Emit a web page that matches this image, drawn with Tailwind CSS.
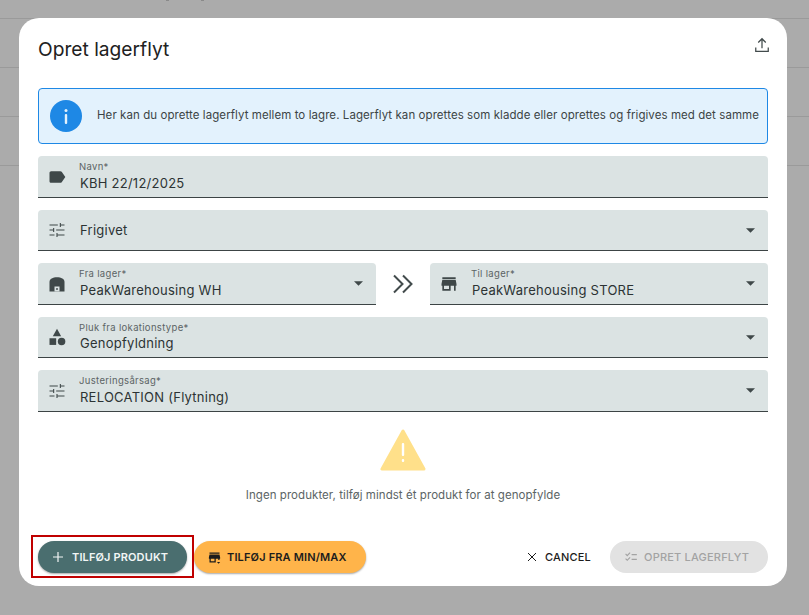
<!DOCTYPE html>
<html lang="da">
<head>
  <meta charset="UTF-8" />
  <title>Opret lagerflyt</title>
  <script src="https://cdn.jsdelivr.net/npm/@tailwindcss/browser@4"></script>
</head>
<body class="font-['Inter',sans-serif]">
  <div class="relative h-[615px] w-[809px] overflow-hidden bg-[#ababab]">
    <!-- baggrund -->
    <div class="absolute left-[166px] top-0 h-px w-[3px] bg-[#8a8a8a]"></div>
    <div class="absolute left-[201px] top-0 h-px w-[3px] bg-[#8a8a8a]"></div>
    <div class="flex flex-col pt-[18px]">
      <div class="h-[49px] border-t border-[#9a9a9a]"></div>
      <div class="h-[49px] border-t border-[#9a9a9a]"></div>
      <div class="h-[49px] border-t border-[#9a9a9a]"></div>
      <div class="h-[49px] border-t border-[#9a9a9a]"></div>
    </div>

    <!-- dialog -->
    <div class="absolute left-[19px] top-[18px] flex h-[568px] w-[768px] flex-col rounded-[20px] bg-white px-[19px]">
      <div class="flex h-[70px] items-start justify-between">
        <h2 class="mt-[19px] text-[19.200px] leading-[24px] text-[#212121]">Opret lagerflyt</h2>
        <svg class="mt-[17px] mr-[-4px]" width="20" height="20" viewBox="0 0 24 24" fill="none" stroke="#424b4c" stroke-width="1.500"><path d="M4.500 15v4.500h15V15M12 16V5M7.500 9 12 4.500 16.500 9"/></svg>
      </div>

      <!-- info -->
      <div class="flex h-[56px] items-center rounded-[4px] border border-[#1e88e5] bg-[#e3f2fd] pl-[11px]">
        <span class="flex h-[32px] w-[32px] shrink-0 items-center justify-center rounded-full bg-[#1e88e5]">
          <svg width="4" height="17" viewBox="0 0 4 17" fill="#e3f2fd"><circle cx="2" cy="2.500" r="1.500"/><rect x="0.800" y="6" width="2.400" height="10" rx="1"/></svg>
        </span>
        <p class="ml-[15px] whitespace-nowrap text-[11.500px] tracking-[0.07px] text-[#3c4445]">Her kan du oprette lagerflyt mellem to lagre. Lagerflyt kan oprettes som kladde eller oprettes og frigives med det samme</p>
      </div>

      <div class="mt-[12px] flex flex-col gap-[12px]">
        <!-- navn -->
        <div class="flex h-[42px] items-center rounded-t-[4px] border-b border-[#3c4445] bg-[#dbe3e3] pl-[9px] pr-[13px]">
          <svg class="shrink-0" width="20" height="20" viewBox="0 0 24 24" fill="#3f4849"><path d="M17.630 5.840C17.270 5.330 16.670 5 16 5L5 5.010C3.900 5.010 3 5.900 3 7v10c0 1.100.9 1.990 2 1.990L16 19c.67 0 1.270-.33 1.630-.84L22 12l-4.370-6.160z"/></svg>
          <div class="ml-[12px] flex flex-col">
            <span class="text-[9.500px] leading-[12px] tracking-[0.33px] text-[#5b6465]">Navn*</span>
            <span class="mt-[1px] ml-[1px] text-[13px] leading-[18px] tracking-[0.25px] text-[#2c3334]">KBH 22/12/2025</span>
          </div>
        </div>

        <!-- status -->
        <div class="flex h-[41px] items-center rounded-t-[4px] border-b border-[#3c4445] bg-[#dbe3e3] pl-[9px] pr-[13px]">
          <svg class="shrink-0" width="20" height="20" viewBox="0 0 24 24" fill="none" stroke="#3f4849" stroke-width="1.300"><path d="M3 6h10M16 3.500v5M16 6h5M3 12h5M8 9.500v5M11 12h10M3 18h6M12 15.500v5M12 18h9"/></svg>
          <span class="mt-[1px] ml-[13px] text-[13px] tracking-[0.25px] text-[#2c3334]">Frigivet</span>
          <svg class="ml-auto" width="9" height="5" viewBox="0 0 10 5" fill="#3f4849"><path d="M0 0l5 5 5-5z"/></svg>
        </div>

        <!-- lagre -->
        <div class="flex items-center">
          <div class="flex h-[42px] w-[338px] items-center rounded-t-[4px] border-b border-[#3c4445] bg-[#dbe3e3] pl-[9px] pr-[13px]">
            <svg class="shrink-0" width="20" height="20" viewBox="0 0 24 24" fill="#3f4849"><path d="M3 21V9.500C3 6 7 4 12 4s9 2 9 5.500V21z"/><rect x="9" y="15" width="6" height="6" fill="#dbe3e3"/><rect x="11" y="17" width="2" height="2"/></svg>
            <div class="ml-[12px] flex flex-col">
              <span class="text-[9.500px] leading-[12px] tracking-[0.33px] text-[#5b6465]">Fra lager*</span>
              <span class="mt-[1px] ml-[1px] text-[13px] leading-[18px] tracking-[0.25px] text-[#2c3334]">PeakWarehousing WH</span>
            </div>
            <svg class="ml-auto" width="9" height="5" viewBox="0 0 10 5" fill="#3f4849"><path d="M0 0l5 5 5-5z"/></svg>
          </div>
          <div class="flex w-[54px] justify-center">
            <svg width="22" height="20" viewBox="0 0 22 20" fill="none" stroke="#424b4c" stroke-width="2"><path d="M2 1.500 10.500 10 2 18.500M11 1.500 19.500 10 11 18.500"/></svg>
          </div>
          <div class="flex h-[42px] w-[338px] items-center rounded-t-[4px] border-b border-[#3c4445] bg-[#dbe3e3] pl-[9px] pr-[13px]">
            <svg class="shrink-0" width="20" height="20" viewBox="0 0 24 24" fill="#3f4849"><path d="M20 4H4v2h16V4zm1 10v-2l-1-5H4l-1 5v2h1v6h10v-6h4v6h2v-6h1zm-9 4H6v-4h6v4z"/></svg>
            <div class="ml-[12px] flex flex-col">
              <span class="text-[9.500px] leading-[12px] tracking-[0.33px] text-[#5b6465]">Til lager*</span>
              <span class="mt-[1px] ml-[1px] text-[13px] leading-[18px] tracking-[0.25px] text-[#2c3334]">PeakWarehousing STORE</span>
            </div>
            <svg class="ml-auto" width="9" height="5" viewBox="0 0 10 5" fill="#3f4849"><path d="M0 0l5 5 5-5z"/></svg>
          </div>
        </div>

        <!-- lokationstype -->
        <div class="flex h-[41px] items-center rounded-t-[4px] border-b border-[#3c4445] bg-[#dbe3e3] pl-[9px] pr-[13px]">
          <svg class="shrink-0" width="20" height="20" viewBox="0 0 24 24" fill="#3f4849"><path d="M12 2 7 11h10z"/><circle cx="17.500" cy="17.500" r="4.500"/><rect x="3" y="13.500" width="8" height="8"/></svg>
          <div class="ml-[12px] flex flex-col">
            <span class="text-[9.500px] leading-[12px] tracking-[0.33px] text-[#5b6465]">Pluk fra lokationstype*</span>
            <span class="ml-[1px] text-[13px] leading-[18px] tracking-[0.25px] text-[#2c3334]">Genopfyldning</span>
          </div>
          <svg class="ml-auto" width="9" height="5" viewBox="0 0 10 5" fill="#3f4849"><path d="M0 0l5 5 5-5z"/></svg>
        </div>

        <!-- justeringsårsag -->
        <div class="flex h-[42px] items-center rounded-t-[4px] border-b border-[#3c4445] bg-[#dbe3e3] pl-[9px] pr-[13px]">
          <svg class="shrink-0" width="20" height="20" viewBox="0 0 24 24" fill="none" stroke="#3f4849" stroke-width="1.300"><path d="M3 6h10M16 3.500v5M16 6h5M3 12h5M8 9.500v5M11 12h10M3 18h6M12 15.500v5M12 18h9"/></svg>
          <div class="ml-[12px] flex flex-col">
            <span class="text-[9.500px] leading-[12px] tracking-[0.33px] text-[#5b6465]">Justeringsårsag*</span>
            <span class="mt-[1px] ml-[1px] text-[13px] leading-[18px] tracking-[0.25px] text-[#2c3334]">RELOCATION (Flytning)</span>
          </div>
          <svg class="ml-auto" width="9" height="5" viewBox="0 0 10 5" fill="#3f4849"><path d="M0 0l5 5 5-5z"/></svg>
        </div>
      </div>

      <!-- tom liste -->
      <div class="mt-[17px] flex flex-col items-center">
        <svg width="46" height="42" viewBox="0 0 46 42"><path d="M23 2 2 40h42z" fill="#ffe08a" stroke="#ffe08a" stroke-width="3" stroke-linejoin="round"/><rect x="21.800" y="14" width="2.400" height="13" rx="1" fill="#fff"/><rect x="21.800" y="30" width="2.400" height="3" rx="1" fill="#fff"/></svg>
        <p class="mt-[16px] text-[11.500px] tracking-[0.06px] text-[#5b6465]">Ingen produkter, tilføj mindst ét produkt for at genopfylde</p>
      </div>

      <!-- knapper -->
      <div class="absolute inset-x-[19px] bottom-[13px] flex h-[32px] items-center">
        <div class="relative flex h-[32px] w-[149px] items-center rounded-full bg-[#4a6e6f] pl-[15px] text-[11px] font-semibold tracking-[0.13px] text-[#f2f6f6] shadow-[0_1px_2px_rgba(0,0,0,0.35)]">
          <svg width="10" height="10" viewBox="0 0 10 10" stroke="#f2f6f6" stroke-width="1.200"><path d="M5 0v10M0 5h10"/></svg>
          <span class="ml-[9px]">TILFØJ PRODUKT</span>
          <div class="absolute left-[-7px] top-[-6px] h-[43px] w-[163px] border-2 border-[#c00000]"></div>
        </div>
        <div class="ml-[7px] flex h-[32px] w-[172px] items-center rounded-full bg-[#ffb44a] pl-[13px] text-[11px] font-semibold tracking-[0.15px] text-[#1c1c1c] shadow-[0_1px_2px_rgba(0,0,0,0.35)]">
          <svg width="15" height="15" viewBox="0 0 24 24" fill="#1c1c1c"><path d="M20 4H4v2h16V4zm1 10v-2l-1-5H4l-1 5v2h1v6h10v-6h4v2h2v-2h1zm-9 4H6v-4h6v4z"/><path d="M16 19h5l-2.500 3z"/></svg>
          <span class="ml-[5px]">TILFØJ FRA MIN/MAX</span>
        </div>
        <div class="ml-auto flex items-center text-[11px] font-medium tracking-[0.2px] text-[#1c1c1c]">
          <svg width="10" height="10" viewBox="0 0 10 10" stroke="#1c1c1c" stroke-width="1"><path d="M1 1l8 8M9 1l-8 8"/></svg>
          <span class="ml-[8px]">CANCEL</span>
        </div>
        <div class="ml-[19px] flex h-[32px] w-[158px] items-center rounded-full bg-[#e2e2e2] pl-[14px] text-[11px] font-medium tracking-[0.2px] text-[#a3a3a3]">
          <svg width="14" height="14" viewBox="0 0 24 24" fill="#a3a3a3"><path d="M22 7h-9v2h9V7zm0 8h-9v2h9v-2zM5.540 11 2 7.460l1.410-1.410 2.120 2.120 4.240-4.240 1.410 1.410L5.540 11zm0 8L2 15.460l1.410-1.410 2.120 2.120 4.240-4.240 1.410 1.410L5.540 19z"/></svg>
          <span class="ml-[6px]">OPRET LAGERFLYT</span>
        </div>
      </div>
    </div>
  </div>
</body>
</html>
